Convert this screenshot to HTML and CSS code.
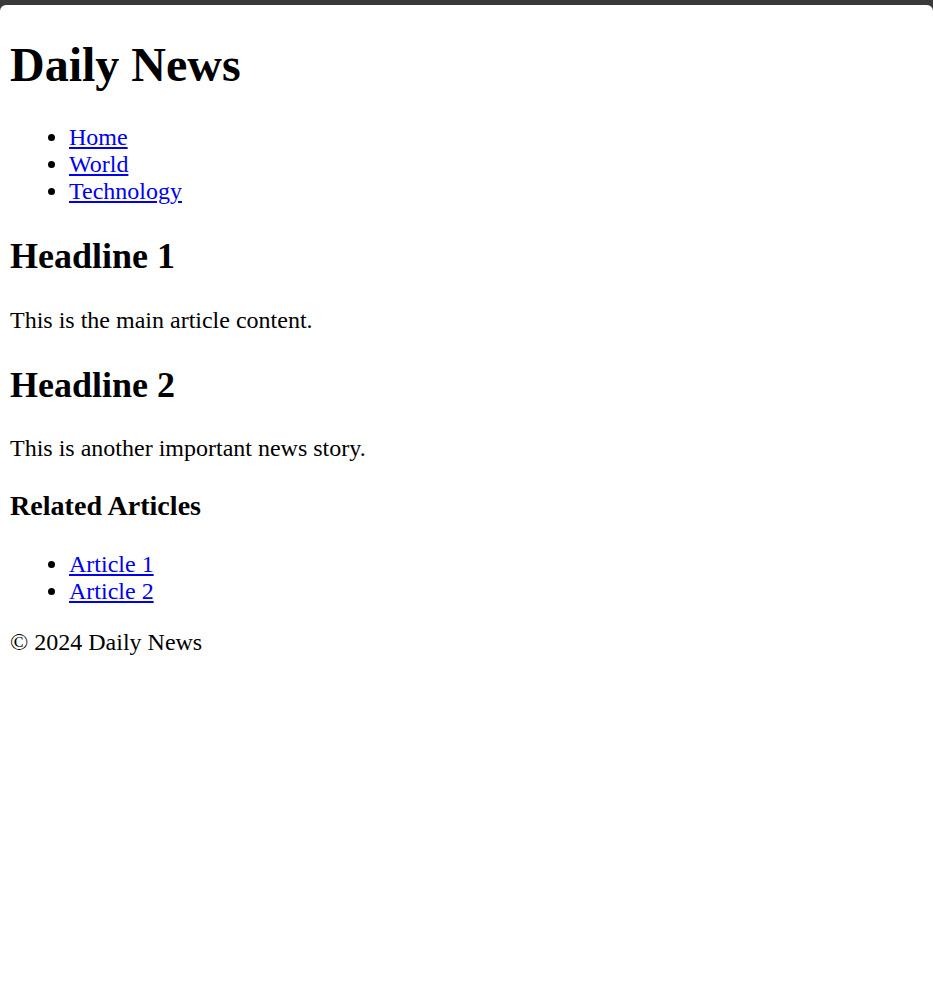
FILE: index.html
```html
<!DOCTYPE html>
<html lang="en">
<head>
<meta charset="utf-8">
<title>Daily News</title>
<link rel="stylesheet" href="styles.css">
</head>
<body>
<div class="page">
  <header>
    <h1 class="site-title">Daily News</h1>
    <nav>
      <ul class="link-list">
        <li><a href="#">Home</a></li>
        <li><a href="#">World</a></li>
        <li><a href="#">Technology</a></li>
      </ul>
    </nav>
  </header>
  <main>
    <article>
      <h2 class="headline">Headline 1</h2>
      <p class="text">This is the main article content.</p>
    </article>
    <article>
      <h2 class="headline">Headline 2</h2>
      <p class="text">This is another important news story.</p>
    </article>
  </main>
  <aside>
    <h3 class="aside-title">Related Articles</h3>
    <ul class="link-list">
      <li><a href="#">Article 1</a></li>
      <li><a href="#">Article 2</a></li>
    </ul>
  </aside>
  <footer>
    <p class="text">&copy; 2024 Daily News</p>
  </footer>
</div>
</body>
</html>
```
FILE: styles.css
```css
html {
  background: #3a3a3a;
}
body {
  margin: 0;
  padding-top: 5px;
  font-family: "Liberation Serif", "Times New Roman", serif;
  font-size: 24px;
  color: #000;
}
.page {
  background: #fff;
  border-radius: 6px 6px 0 0;
  min-height: 1003px;
  padding: 1px 10px 0;
  box-sizing: border-box;
}
.site-title {
  font-size: 2em;
  font-weight: bold;
  margin: 0.64em 0 0.67em;
}
.link-list {
  margin: 1em 0;
  padding-left: 59px;
}
.link-list a {
  color: #0000ee;
}
.headline {
  font-size: 1.5em;
  font-weight: bold;
  margin: 0.83em 0;
}
.aside-title {
  font-size: 1.17em;
  font-weight: bold;
  margin: 1em 0;
}
.text {
  margin: 1em 0;
}
```
